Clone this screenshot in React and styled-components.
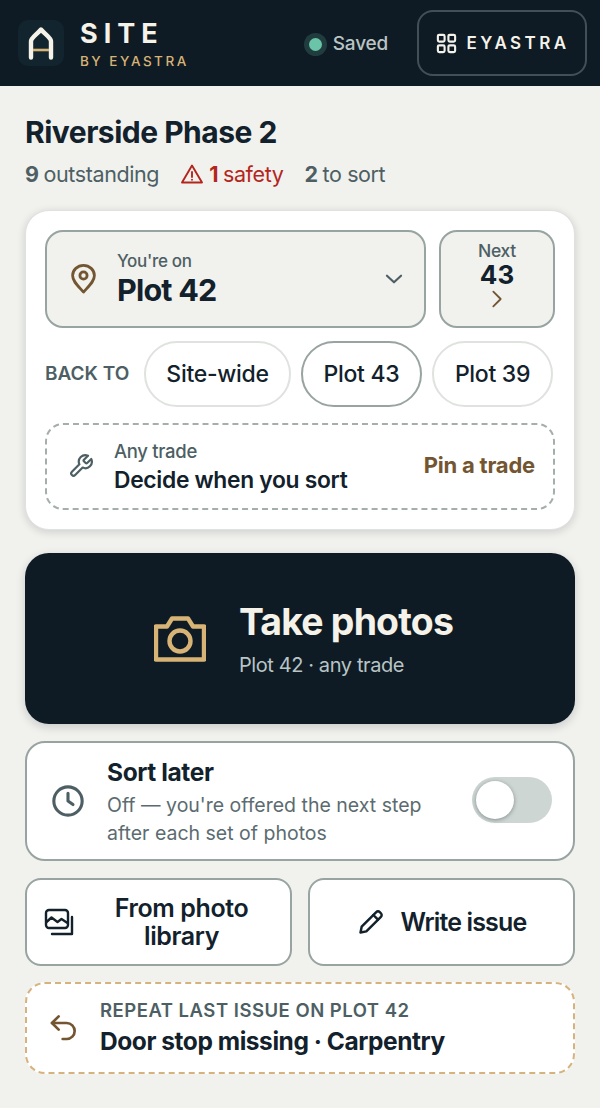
import styled, { createGlobalStyle } from 'styled-components';

const GlobalStyle = createGlobalStyle`
  html, body {
    margin: 0;
    padding: 0;
    background: #f1f1ed;
  }
  * {
    box-sizing: border-box;
  }
  body {
    font-family: 'Inter', 'Liberation Sans', sans-serif;
    color: #12212b;
  }
`;

const Page = styled.div`
  width: 600px;
  height: 1108px;
  overflow: hidden;
  background: #f1f1ed;
`;

const TopBar = styled.header`
  height: 86px;
  background: #0e1b24;
  display: flex;
  align-items: center;
  padding: 0 13px 0 18px;
`;

const LogoTile = styled.div`
  width: 46px;
  height: 46px;
  border-radius: 10px;
  background: #12252e;
  display: flex;
  align-items: center;
  justify-content: center;
`;

const Brand = styled.div`
  margin-left: 16px;
  padding-top: 2px;
  display: flex;
  flex-direction: column;
  gap: 4px;
`;

const BrandName = styled.div`
  font-size: 27px;
  line-height: 30px;
  font-weight: 700;
  letter-spacing: 6px;
  color: #f5f2ea;
`;

const BrandSub = styled.div`
  font-size: 13.5px;
  line-height: 16px;
  font-weight: 500;
  letter-spacing: 2.5px;
  color: #d8b376;
`;

const SavedWrap = styled.div`
  margin-left: auto;
  display: flex;
  align-items: center;
  gap: 11px;
  font-size: 19px;
  line-height: 24px;
  padding-top: 2px;
  font-weight: 500;
  letter-spacing: -0.2px;
  color: #b9c4c4;
`;

const SavedDot = styled.span`
  width: 13px;
  height: 13px;
  border-radius: 50%;
  background: #6bc4a8;
  box-shadow: 0 0 0 5px rgba(107, 196, 168, 0.2);
`;

const AppsButton = styled.div`
  margin-left: 29px;
  width: 170px;
  height: 66px;
  border: 2px solid #434f57;
  border-radius: 16px;
  display: flex;
  align-items: center;
  justify-content: center;
  gap: 9px;
  font-size: 17px;
  font-weight: 600;
  letter-spacing: 3.4px;
  color: #f5f2ea;
`;

const Content = styled.main`
  padding: 28px 25px 0;
`;

const Title = styled.h1`
  margin: 0;
  font-size: 30px;
  line-height: 36px;
  font-weight: 700;
  letter-spacing: -0.5px;
  color: #12212b;
`;

const Stats = styled.div`
  margin-top: 9px;
  display: flex;
  align-items: center;
  gap: 21px;
  height: 30px;
`;

const Stat = styled.span`
  display: inline-flex;
  align-items: center;
  font-size: 21.5px;
  letter-spacing: -0.4px;
  color: ${(p) => (p.$danger ? '#b3261e' : '#4d5f64')};

  b {
    font-weight: 700;
    margin-right: 5px;
  }

  svg {
    margin-right: 5px;
  }
`;

const Card = styled.section`
  margin-top: 21px;
  height: 320px;
  background: #fff;
  border: 1px solid #dfe2df;
  border-radius: 24px;
  box-shadow: 0 2px 8px rgba(18, 33, 43, 0.16);
  padding: 19px;
  display: flex;
  flex-direction: column;
  gap: 13px;
`;

const PlotRow = styled.div`
  display: flex;
  gap: 13px;
  height: 99px;
`;

const PlotSelect = styled.div`
  flex: 1;
  background: #f1f1ed;
  border: 2px solid #98a4a1;
  border-radius: 18px;
  display: flex;
  align-items: center;
  padding: 0 17px 0 24px;
`;

const PlotText = styled.div`
  margin-left: 21px;
  flex: 1;
  display: flex;
  flex-direction: column;
`;

const PlotLabel = styled.span`
  font-size: 17px;
  line-height: 22px;
  font-weight: 500;
  letter-spacing: -0.3px;
  color: #4d5f64;
`;

const PlotName = styled.span`
  font-size: 30.5px;
  line-height: 36px;
  font-weight: 700;
  letter-spacing: -0.8px;
  color: #12212b;
`;

const NextButton = styled.div`
  width: 116px;
  background: #f1f1ed;
  border: 2px solid #98a4a1;
  border-radius: 18px;
  padding-bottom: 6px;
  display: flex;
  flex-direction: column;
  align-items: center;
  justify-content: center;
`;

const NextLabel = styled.span`
  font-size: 17.5px;
  line-height: 20px;
  font-weight: 500;
  letter-spacing: -0.3px;
  color: #4d5f64;
`;

const NextNumber = styled.span`
  font-size: 26px;
  line-height: 27px;
  font-weight: 700;
  color: #12212b;
`;

const BackRow = styled.div`
  display: flex;
  align-items: center;
  height: 66px;
`;

const BackLabel = styled.span`
  width: 99px;
  font-size: 19px;
  font-weight: 600;
  color: #4d5f64;
`;

const Chip = styled.div`
  height: 66px;
  width: ${(p) => p.$width}px;
  margin-right: ${(p) => p.$gap || 0}px;
  border-radius: 33px;
  border: 2px solid ${(p) => (p.$active ? '#98a4a1' : '#dfe2df')};
  display: flex;
  align-items: center;
  justify-content: center;
  font-size: 23px;
  font-weight: 500;
  letter-spacing: -0.3px;
  color: #12212b;
`;

const TradeRow = styled.div`
  height: 88px;
  border: 2px dashed #a4aeac;
  border-radius: 18px;
  display: flex;
  align-items: center;
  padding: 0 18px 0 21px;
  margin-top: 3px;
`;

const TradeText = styled.div`
  margin-left: 20px;
  flex: 1;
  display: flex;
  flex-direction: column;
  gap: 3px;
`;

const TradeLabel = styled.span`
  font-size: 18.5px;
  line-height: 24px;
  font-weight: 500;
  letter-spacing: -0.3px;
  color: #4d5f64;
`;

const TradeValue = styled.span`
  font-size: 22.8px;
  line-height: 28px;
  font-weight: 600;
  letter-spacing: -0.3px;
  color: #12212b;
`;

const PinLink = styled.span`
  font-size: 22px;
  font-weight: 700;
  letter-spacing: -0.2px;
  color: #735631;
  margin-bottom: 2px;
`;

const TakePhotos = styled.div`
  margin-top: 23px;
  height: 171px;
  background: #0e1b24;
  border-radius: 24px;
  box-shadow: 0 3px 10px rgba(18, 33, 43, 0.18);
  display: flex;
  align-items: center;
  justify-content: center;
  gap: 33px;
  padding-left: 7px;
`;

const TakeText = styled.div`
  display: flex;
  flex-direction: column;
  gap: 8px;
`;

const TakeTitle = styled.span`
  font-size: 37.4px;
  line-height: 44px;
  font-weight: 700;
  letter-spacing: -0.8px;
  color: #f5f2ea;
`;

const TakeSub = styled.span`
  font-size: 20px;
  line-height: 26px;
  letter-spacing: -0.4px;
  color: #b9c4c4;
`;

const SortCard = styled.div`
  margin-top: 17px;
  height: 120px;
  background: #fff;
  border: 2px solid #98a4a1;
  border-radius: 20px;
  display: flex;
  align-items: center;
  padding: 0 21px 0 24px;
`;

const SortText = styled.div`
  margin-left: 22px;
  flex: 1;
  display: flex;
  flex-direction: column;
`;

const SortTitle = styled.span`
  font-size: 24.5px;
  line-height: 32px;
  font-weight: 700;
  letter-spacing: -0.4px;
  margin-bottom: 3px;
  color: #12212b;
`;

const SortSub = styled.span`
  font-size: 19.5px;
  line-height: 28px;
  color: #5b6b70;
`;

const Toggle = styled.div`
  position: relative;
  width: 80px;
  height: 46px;
  border-radius: 23px;
  background: #ced6d3;
  margin-bottom: 2px;
`;

const ToggleKnob = styled.span`
  position: absolute;
  left: 4px;
  top: 4px;
  width: 38px;
  height: 38px;
  border-radius: 50%;
  background: #fff;
  box-shadow: 0 1px 4px rgba(18, 33, 43, 0.4);
`;

const ActionRow = styled.div`
  margin-top: 17px;
  display: grid;
  grid-template-columns: 267px 267px;
  gap: 16px;
`;

const ActionButton = styled.div`
  height: 88px;
  background: #fff;
  border: 2px solid #98a4a1;
  border-radius: 16px;
  display: flex;
  align-items: center;
  justify-content: center;
  padding: 0 17px;
  gap: 16px;
  font-size: 25px;
  line-height: 28px;
  font-weight: 600;
  letter-spacing: -0.4px;
  color: #12212b;
`;

const ActionLabel = styled.span`
  flex: ${(p) => (p.$fill ? 1 : 'none')};
  text-align: center;
  letter-spacing: ${(p) => (p.$fill ? '-0.4px' : '-0.85px')};
`;

const RepeatCard = styled.div`
  margin-top: 16px;
  height: 92px;
  background: #fff;
  border: 2px dashed #d6b37e;
  border-radius: 20px;
  display: flex;
  align-items: center;
  padding: 0 21px 2px;
`;

const RepeatText = styled.div`
  margin-left: 20px;
  display: flex;
  flex-direction: column;
  gap: 3px;
`;

const RepeatLabel = styled.span`
  font-size: 18.5px;
  line-height: 24px;
  font-weight: 600;
  letter-spacing: 0.5px;
  color: #4d5f64;
`;

const RepeatValue = styled.span`
  font-size: 24.5px;
  line-height: 32px;
  font-weight: 700;
  letter-spacing: -0.45px;
  color: #12212b;
`;

function Icon({ size = 24, color = 'currentColor', width = 2, children }) {
  return (
    <svg
      width={size}
      height={size}
      viewBox="0 0 24 24"
      fill="none"
      stroke={color}
      strokeWidth={width}
      strokeLinecap="round"
      strokeLinejoin="round"
    >
      {children}
    </svg>
  );
}

function App() {
  return (
    <Page>
      <GlobalStyle />
      <TopBar>
        <LogoTile>
          <svg width="28" height="35" viewBox="0 0 28 35" fill="none">
            <path
              d="M4 31.5V15.5C4 11.5 9.5 9 14 3.5C18.5 9 24 11.5 24 15.5V31.5"
              stroke="#f5f2ea"
              strokeWidth="4.4"
              strokeLinecap="round"
              strokeLinejoin="round"
            />
            <path d="M6 24H22" stroke="#d8b376" strokeWidth="2.6" />
          </svg>
        </LogoTile>
        <Brand>
          <BrandName>SITE</BrandName>
          <BrandSub>BY EYASTRA</BrandSub>
        </Brand>
        <SavedWrap>
          <SavedDot />
          Saved
        </SavedWrap>
        <AppsButton>
          <Icon size={23} color="#f5f2ea" width={2.2}>
            <rect x="3" y="3" width="7" height="7" rx="1.5" />
            <rect x="14" y="3" width="7" height="7" rx="1.5" />
            <rect x="3" y="14" width="7" height="7" rx="1.5" />
            <rect x="14" y="14" width="7" height="7" rx="1.5" />
          </Icon>
          EYASTRA
        </AppsButton>
      </TopBar>
      <Content>
        <Title>Riverside Phase 2</Title>
        <Stats>
          <Stat>
            <b>9</b>outstanding
          </Stat>
          <Stat $danger>
            <Icon size={24} color="#b3261e" width={1.9}>
              <path d="M12 3.5L22 20.5H2Z" />
              <path d="M12 10v5" />
              <path d="M12 17.6v.1" />
            </Icon>
            <b>1</b>safety
          </Stat>
          <Stat>
            <b>2</b>to sort
          </Stat>
        </Stats>

        <Card>
          <PlotRow>
            <PlotSelect>
              <svg width="25" height="30" viewBox="0 0 25 30" fill="none" stroke="#735631" strokeWidth="2.8" strokeLinejoin="round">
                <path d="M12.5 28C7 22 1.6 17.5 1.6 11.6a10.9 10.2 0 0 1 21.8 0C23.4 17.5 18 22 12.5 28z" />
                <circle cx="12.5" cy="11.5" r="3.6" />
              </svg>
              <PlotText>
                <PlotLabel>You're on</PlotLabel>
                <PlotName>Plot 42</PlotName>
              </PlotText>
              <Icon size={26} color="#4d5f64">
                <path d="M5.5 9l6.5 6 6.5-6" />
              </Icon>
            </PlotSelect>
            <NextButton>
              <NextLabel>Next</NextLabel>
              <NextNumber>43</NextNumber>
              <Icon size={22} color="#735631">
                <path d="M8 4l8 8-8 8" />
              </Icon>
            </NextButton>
          </PlotRow>

          <BackRow>
            <BackLabel>BACK TO</BackLabel>
            <Chip $width={147} $gap={10}>Site-wide</Chip>
            <Chip $width={121} $gap={10} $active>Plot 43</Chip>
            <Chip $width={121}>Plot 39</Chip>
          </BackRow>

          <TradeRow>
            <Icon size={26} color="#4d5f64" width={2}>
              <path d="M14.7 6.3a1 1 0 0 0 0 1.4l1.6 1.6a1 1 0 0 0 1.4 0l3.77-3.77a6 6 0 0 1-7.94 7.94l-6.91 6.91a2.12 2.12 0 0 1-3-3l6.91-6.91a6 6 0 0 1 7.94-7.94l-3.76 3.76z" />
            </Icon>
            <TradeText>
              <TradeLabel>Any trade</TradeLabel>
              <TradeValue>Decide when you sort</TradeValue>
            </TradeText>
            <PinLink>Pin a trade</PinLink>
          </TradeRow>
        </Card>

        <TakePhotos>
          <svg width="52" height="46" viewBox="0 0 52 46" fill="none">
            <path
              d="M2 43.5V10.5H13L18 2.5H34L39 10.5H50V43.5Z"
              stroke="#d8b376"
              strokeWidth="4.4"
              strokeLinejoin="round"
            />
            <circle cx="26" cy="25" r="10.5" stroke="#d8b376" strokeWidth="4.4" />
          </svg>
          <TakeText>
            <TakeTitle>Take photos</TakeTitle>
            <TakeSub>Plot 42 · any trade</TakeSub>
          </TakeText>
        </TakePhotos>

        <SortCard>
          <Icon size={34} color="#4d5f64" width={2.2}>
            <circle cx="12" cy="12" r="10" />
            <path d="M12 6.5V12l3.5 2.5" />
          </Icon>
          <SortText>
            <SortTitle>Sort later</SortTitle>
            <SortSub>
              Off — you're offered the next step
              <br />
              after each set of photos
            </SortSub>
          </SortText>
          <Toggle>
            <ToggleKnob />
          </Toggle>
        </SortCard>

        <ActionRow>
          <ActionButton>
            <svg width="30" height="28" viewBox="0 0 30 28" fill="none" stroke="#12212b" strokeWidth="2.4" strokeLinecap="round" strokeLinejoin="round">
              <rect x="2" y="2" width="22" height="18" rx="3" />
              <path d="M2.5 14l5-4.5 6 4.5 4-3 6 4" />
              <path d="M28 9v17H8" />
            </svg>
            <ActionLabel $fill>From photo library</ActionLabel>
          </ActionButton>
          <ActionButton>
            <Icon size={28} color="#12212b" width={2.1}>
              <path d="M16.5 3.5a2.1 2.1 0 0 1 3 0l1 1a2.1 2.1 0 0 1 0 3L8 20l-5 1 1-5z" />
              <path d="M14 6l4 4" />
            </Icon>
            <ActionLabel>Write issue</ActionLabel>
          </ActionButton>
        </ActionRow>

        <RepeatCard>
          <Icon size={32} color="#735631" width={2}>
            <path d="M8 4L3 9l5 5" />
            <path d="M3 9h11a6 6 0 0 1 0 12h-3" />
          </Icon>
          <RepeatText>
            <RepeatLabel>REPEAT LAST ISSUE ON PLOT 42</RepeatLabel>
            <RepeatValue>Door stop missing · Carpentry</RepeatValue>
          </RepeatText>
        </RepeatCard>
      </Content>
    </Page>
  );
}

export default App;
